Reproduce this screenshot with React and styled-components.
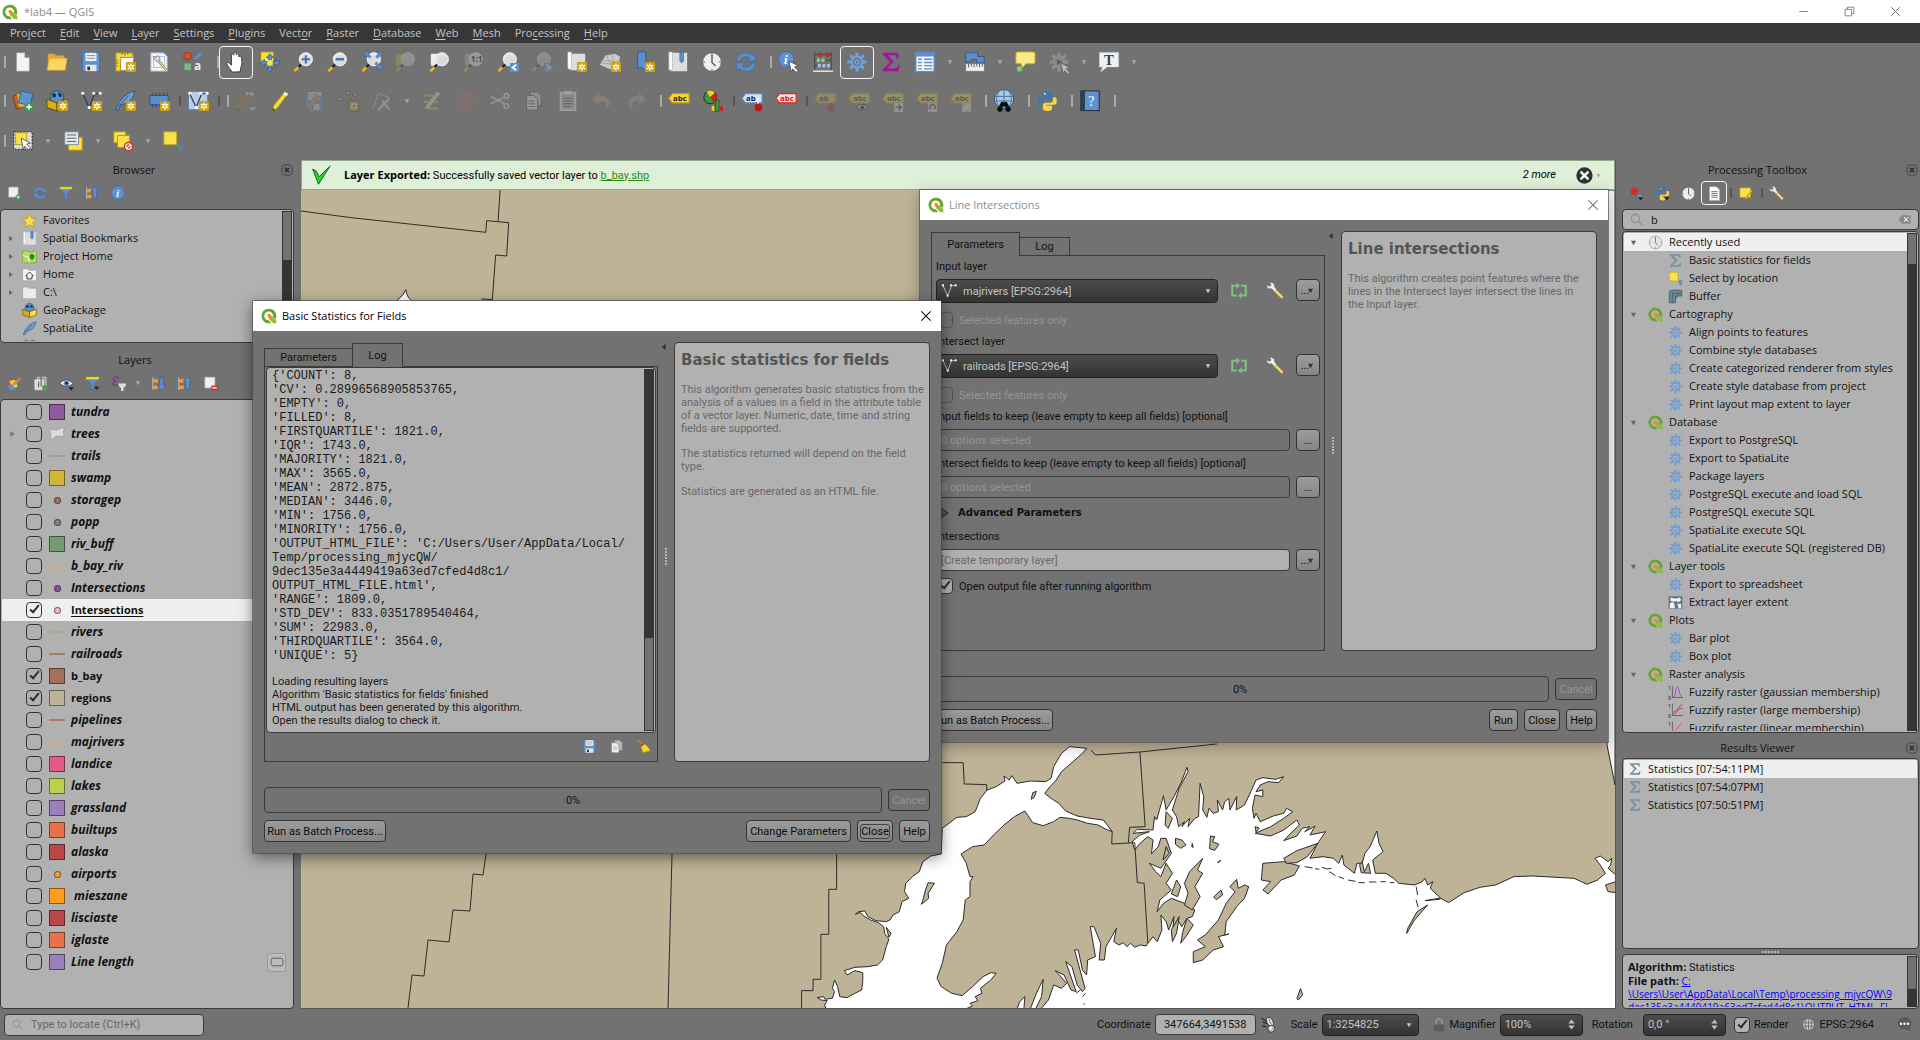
import React from "react";
import styled, { createGlobalStyle, css } from "styled-components";

const ui = '"Open Sans", "Noto Sans", sans-serif';
const dlg = 'Roboto, "Liberation Sans", sans-serif';
const c = {
  bg: "#727272",
  list: "#b1b1b1",
  line: "#3a3a3a",
  dark: "#353535",
  hi: "#efefef",
  land: "#beb297",
  text: "#111",
};

const GlobalStyle = createGlobalStyle`
  *, *::before, *::after { box-sizing: border-box; }
  body { margin: 0; background: ${c.bg}; }
  button, input, select { font: inherit; color: inherit; margin: 0; }
  ul, p, h1, h2, h3 { margin: 0; padding: 0; list-style: none; }
`;

/* ---------- icons ---------- */

const Star = () => (
  <g>
    <rect x="13" y="12" width="11" height="11" rx="1.5" fill="#c9a20c" />
    <path d="M18.5 13.5v8M15 15.5l7 4M22 15.5l-7 4" stroke="#fff" strokeWidth="1.5" />
    <circle cx="18.5" cy="17.5" r="1" fill="#c9a20c" />
  </g>
);
const Lens = ({ handle = "#f0b429" }) => (
  <g>
    <path d="M9 14.5l-3.5 3.5" stroke="#222" strokeWidth="2.4" />
    <path d="M6 17.5L1.5 22" stroke={handle} strokeWidth="2.8" />
    <circle cx="14" cy="9" r="7.200" fill="#d9dcdc" stroke="#f4f4f4" strokeWidth="1" />
    <path d="M8 9a6 6 0 0 1 11-3" fill="none" stroke="#fff" strokeWidth="1" opacity=".8" />
  </g>
);
const Badge = ({ d }) => (
  <g>
    <rect x="14" y="13" width="10" height="10" rx="1" fill="#5b8ecb" />
    <path d={d} fill="none" stroke="#fff" strokeWidth="2" />
  </g>
);
const Page = ({ fill = "#f4f4f4" }) => <path d="M5 2h9l5 5v15H5z M14 2v5h5" fill={fill} stroke="#9a9a9a" strokeWidth=".5" />;
const Pencil = ({ fill = "#f2d93b" }) => (
  <g>
    <path d="M17 2l4 2L9 20l-5 3 1-6z" fill={fill} stroke="#8d7a10" strokeWidth=".8" />
    <path d="M17 2l4 2-1.500 2.500-4-2z" fill="#eee" />
    <path d="M4 23l.5-3 2 1.500z" fill="#333" />
  </g>
);
const Tag = ({ fill = "#f2d93b", stroke = "#c9a20c", ink = "#222", word = "abc" }) => (
  <g>
    <path d="M1 9l4-5h18v10H5z" fill={fill} stroke={stroke} strokeWidth="1.2" />
    <text x="5.500" y="12" fontSize="8.500" fontWeight="700" fontFamily="Open Sans, sans-serif" fill={ink}>{word}</text>
  </g>
);
const Cursor = ({ x = 12, y = 11 }) => (
  <path transform={`translate(${x} ${y})`} d="M0 0l10 5-4 1.500 4 4-2 2-4-4-1.500 4z" fill="#fff" stroke="#444" strokeWidth=".9" />
);
const Gear = ({ fill = "#6fa0dc", hole = "#727272" }) => (
  <g>
    {[0, 45, 90, 135].map((a) => (
      <rect key={a} x="10.300" y="1.500" width="3.400" height="21" rx="1" fill={fill} transform={`rotate(${a} 12 12)`} />
    ))}
    <circle cx="12" cy="12" r="7" fill={fill} />
    <circle cx="12" cy="12" r="4.600" fill={hole} />
    <circle cx="12" cy="12" r="3" fill={fill} />
    <circle cx="12" cy="12" r="1.300" fill={hole} />
  </g>
);
const Refresh = ({ fill = "#5b8ecb" }) => (
  <g fill={fill} stroke="#35618f" strokeWidth=".5">
    <path d="M2 11C2 5 7 1.500 12.500 2c3 .2 5 1.300 6.500 3l3-2.500V11h-9l3.200-3C14 5.500 7.500 5 5.500 11z" />
    <path d="M22 13c0 6-5 9.500-10.500 9-3-.2-5-1.300-6.500-3l-3 2.500V13h9l-3.200 3c2.200 2.500 8.700 3 10.700-3z" />
  </g>
);
const Tree = ({ up }) => (
  <g>
    <path d="M3 2v20M3 8h4M3 19h4" stroke="#ddd" strokeWidth="1.300" fill="none" />
    <rect x="5" y="5" width="6" height="6" fill="#f39a2b" /><rect x="5" y="15" width="6" height="6" fill="#f39a2b" />
    <path d={up ? "M17 1l7 8h-4v12h-6V9h-4z" : "M17 23l7-8h-4V3h-6v12h-4z"} fill="#5b8ecb" stroke="#35618f" />
  </g>
);
const Sigma = ({ fill = "#a4129b" }) => (
  <path d="M3 2h17v6h-1.500C18 5 17 4.500 14 4.500H8.500L15 11.500 8 19h7c3 0 4-.8 5-4h1.500L20 22H3v-1.500l8-8.500-8-8.500z" fill={fill} />
);
const Pin = ({ x = 17, y = 14 }) => (
  <path transform={`translate(${x} ${y})`} d="M3 10C1 6 0 5 0 3a3 3 0 0 1 6 0c0 2-1 3-3 7zM3 1.800a1.200 1.200 0 1 0 .01 0z" fill="#5a86a8" fillRule="evenodd" />
);
const Python = () => (
  <g>
    <path d="M12 1c-5 0-5 2-5 4v2h6v1H4c-3 0-3 8 0 8h2v-3c0-2 1.500-3 3-3h5c2 0 3-1 3-3V4c0-2-2-3-5-3z" fill="#3b78ad" />
    <path d="M12.500 23c5 0 5-2 5-4v-2h-6v-1h9c3 0 3-8 0-8h-2v3c0 2-1.500 3-3 3h-5c-2 0-3 1-3 3v3c0 2 2 3 5 3z" fill="#f8d24c" />
    <circle cx="9.500" cy="4" r="1" fill="#fff" />
  </g>
);
const Table = () => (
  <g>
    <rect x="2" y="1.500" width="20" height="21" fill="#f2f4f6" stroke="#5b8ecb" strokeWidth="1.500" />
    <rect x="2" y="1.500" width="20" height="4.500" fill="#5b8ecb" />
    <path d="M4.500 9h4M4.500 12.500h4M4.500 16h4M4.500 19.500h4M11 9h9M11 12.500h9M11 16h9M11 19.500h9" stroke="#5b8ecb" strokeWidth="1.500" />
  </g>
);
const Clock = ({ face = "#efefef", ink = "#555" }) => (
  <g>
    <circle cx="12" cy="12" r="10.200" fill={face} stroke={ink} strokeWidth=".8" />
    <path d="M12 4v8.500l4 4" stroke={ink} strokeWidth="1.500" fill="none" />
    <path d="M12 2.500v2M12 19.500v2M2.500 12h2M19.500 12h2" stroke={ink} />
  </g>
);
const Wrench = () => (
  <g>
    <path d="M11 10l10 10" stroke="#a98a35" strokeWidth="4.600" strokeLinecap="round" />
    <path d="M12 11l9 9" stroke="#f2dc86" strokeWidth="3" strokeLinecap="round" />
    <path d="M1 4l4 2 2-2-2-3c4-1 7 2 6 5l3 4-2.500 2.500-4-4C4 10 1 8 1 4z" fill="#f1f1f1" stroke="#777" strokeWidth=".6" />
  </g>
);
const Funnel = () => (
  <g>
    <path d="M2 3h20v2l-7.500 8v9l-5-1v-8L2 5z" fill="#5b8ecb" stroke="#35618f" strokeWidth=".7" />
    <path d="M1.500 1.500h21v4h-21z" fill="#f5df3d" stroke="#a9920f" strokeWidth=".8" />
  </g>
);
const GlobeBox = () => (
  <g>
    <circle cx="12" cy="8" r="7.300" fill="#5f8fc4" stroke="#2c4f75" />
    <path d="M7 4c2-1 4 0 4 2s-3 3-4 1zM13 3c3 0 5 2 4 4s-4 0-4-4z" fill="#16324f" />
    <path d="M1 10l11 4v9L1 19z" fill="#d8ad18" stroke="#59480a" /><path d="M23 10l-11 4v9l11-4z" fill="#f6e04c" stroke="#59480a" />
  </g>
);
const Feather = () => <path d="M2 22C5 12 12 4 22 1c0 7-4 13-14 15l-4 6zM5 18L16 6" fill="#6f9fd6" stroke="#2d5276" strokeWidth="1" />;
const Chip = ({ fill = "#5b8ecb" }) => (
  <g><path d="M5 3v16M9 3v16M13 3v16M17 3v16M21 3v16" stroke="#2d4f76" strokeWidth="1.300" /><rect x="2" y="6" width="20" height="10" rx="1" fill={fill} stroke="#2d4f76" /></g>
);
const VLine = ({ ink = "#223a52" }) => (
  <g><path d="M3 4l7 15 6-15 6 0" fill="none" stroke={ink} strokeWidth="1.300" /><g fill="#fff"><circle cx="3" cy="3.500" r="1.700" /><circle cx="10" cy="19" r="1.700" /><circle cx="15" cy="3.500" r="1.700" /><circle cx="22" cy="3.500" r="1.700" /></g></g>
);
const Floppy = () => (
  <g><path d="M2.500 1.500h19v21h-19z" fill="#5f93cf" stroke="#3d6ea5" /><rect x="6" y="2" width="12" height="9" fill="#f0f0f0" /><path d="M7.500 5h9M7.500 8h9" stroke="#888" /><rect x="6" y="15" width="12" height="7" fill="#e6e6e6" /><rect x="8" y="17" width="3" height="4" fill="#333" /></g>
);
const Q = () => (
  <g>
    <path fillRule="evenodd" d="M12 1a11 11 0 1 0 3 21.500l-3.500-4A6.600 6.600 0 1 1 18 13l4 3.500A11 11 0 0 0 12 1z" fill="#6aa42c" />
    <path d="M12 11l4 .5 7 7V23h-4.500l-7-7z" fill="#8fbf3a" />
    <path d="M10 9h5l-1 2 3 3-2.500 2.500-3-3-1.500 1z" fill="#ee8a2c" />
  </g>
);
const Note = () => (
  <g><path d="M3 3h17v15H3z" fill="#f9e14b" stroke="#b8a012" /></g>
);
const Fuzzy = ({ d, stroke }) => (
  <g><path d="M7 1v19h17" fill="none" stroke="#555" strokeWidth="1.300" /><text x="0" y="8" fontSize="8" fontFamily="Open Sans, sans-serif">1</text><text x="0" y="24" fontSize="8" fontFamily="Open Sans, sans-serif">0</text><path d={d} fill="none" stroke={stroke} strokeWidth="1.500" /></g>
);

const glyphs = {
  newPage: <Page />,
  open: <g><path d="M2 3h7l2 2h9v15H2z" fill="#d9a93a" /><path d="M1 21L4 8h19l-2 13z" fill="#fcd462" stroke="#cf9f31" strokeWidth=".6" /></g>,
  save: <Floppy />,
  newLayout: <g><rect x="5" y="3" width="16" height="18" fill="#f7f7f7" /><path d="M2 2h18v5H7v15H2z" fill="#f5d93e" stroke="#a48b12" /><path d="M9 2v2M12 2v3M15 2v2M2 10h2M2 13h3M2 16h2" stroke="#7a6608" /><Star /></g>,
  layouts: <g><path d="M3 2h14l4 4v16H3z" fill="#f7f7f7" stroke="#9ab" /><rect x="6" y="6" width="12" height="12" fill="none" stroke="#9dc0e6" /><path d="M11 10l9 11" stroke="#777" strokeWidth="3" /><path d="M11 10l9 11" stroke="#f0d97f" strokeWidth="1.500" /><path d="M6 6l3 1 1-2c3 1 4 4 2 6-3 1-6-2-6-5z" fill="#ddd" stroke="#555" strokeWidth=".6" /></g>,
  style: <g><circle cx="6" cy="5.500" r="4.200" fill="#d2542d" stroke="#8e3519" /><path d="M14 9l7-7" stroke="#5b8ecb" strokeWidth="3" /><rect x="2" y="13" width="8.500" height="8.500" fill="#82b38a" stroke="#567b5c" /><text x="13" y="21" fontSize="13" fontWeight="700" fontFamily="Open Sans, sans-serif" fill="#eee">a</text></g>,
  hand: <path d="M8 23c-2-3-5-6-6-9 0-2 2-2 3-.5l2 2V4.500c0-2 2.400-2 2.600 0V2.800c0-2 2.700-2 2.800 0v1.400c.2-2 2.600-1.700 2.700.2v2c.3-1.800 2.500-1.500 2.600.3 1 4 1.300 8-.7 12l-.5 4z" fill="#fff" stroke="#333" strokeWidth="1" />,
  panSel: <g><path d="M2 1h14v14H2z" fill="#f9e14b" stroke="#9f8b10" /><path d="M12 3l4 4h-2.500v4.500H18V9l5 4-5 4v-2.500h-4.500V19H16l-4 4-4-4h2.500v-4.500H6V17l-5-4 5-4v2.500h4.500V7H8z" fill="#5b8ecb" stroke="#2d4f76" strokeWidth=".7" /><path d="M9 10h6v6H9z" fill="#f9e14b" /></g>,
  zoomIn: <g><Lens /><path d="M14 4.500v9M9.500 9h9" stroke="#3a73b5" strokeWidth="2.200" /></g>,
  zoomOut: <g><Lens /><path d="M9.500 9h9" stroke="#3a73b5" strokeWidth="2.600" /></g>,
  zoomFull: <g><Lens /><path d="M4 1h6L8 3l3 3-2 2-3-3-2 2zM23 1v6l-2-2-3 3-2-2 3-3-2-2zM23 20h-6l2-2-4-4 2-2 4 4 2-2z" fill="#5b8ecb" stroke="#2d5a92" strokeWidth=".5" /></g>,
  zoomSel: <g opacity=".28"><path d="M1 3h10v13H1z" fill="#c9b53a" /><Lens /></g>,
  zoomLayer: <g><path d="M2 3h9v13H2z" fill="#eee" /><Lens /></g>,
  zoomNative: <g opacity=".35"><path d="M2 3h9v13H2z" fill="#aaa" /><Lens /><text x="8.500" y="12.500" fontSize="9" fontWeight="700" fontFamily="Open Sans, sans-serif">1:1</text></g>,
  zoomLast: <g><Lens /><Badge d="M21 15l-4 3 4 3" /></g>,
  zoomNext: <g opacity=".25"><Lens /><Badge d="M17 15l4 3-4 3" /></g>,
  newMap: <g><path d="M3 1h4v19H5c-2 0-2-2-2-3z" fill="#fff" stroke="#aaa" strokeWidth=".6" /><path d="M7 3h15v18H5c2 0 2-1 2-3z" fill="#dedede" /><Star /></g>,
  new3d: <g><path d="M1 15l6-10 10-2 6 3-2 12-9 2z" fill="#c9c9c9" /><path d="M4 10l17 2M8 5l7 12M14 4l3 13M3 13l16 2" stroke="#999" strokeWidth=".8" /><Star /></g>,
  newBookmark: <g><path d="M5 1h9v21l-4.500-4L5 19z" fill="#5b8ecb" stroke="#2d5a92" /><Star /></g>,
  bookmarks: <g><path d="M2 1h4v20H3c-1 0-1-1-1-2z" fill="#fafafa" stroke="#aaa" strokeWidth=".6" /><path d="M6 2h16v20H3c2 0 3-1 3-3z" fill="#dedede" /><path d="M14 1h4v10l-2 2-2-2z" fill="#5b8ecb" stroke="#2d5a92" strokeWidth=".6" /></g>,
  clock: <Clock />,
  refresh: <Refresh />,
  identify: <g><circle cx="9" cy="9" r="8.300" fill="#5f93cf" stroke="#3c6ea6" /><text x="6.500" y="14" fontSize="14" fontStyle="italic" fontWeight="700" fontFamily="Liberation Serif, serif" fill="#fff">i</text><Cursor /></g>,
  abacus: <g><path d="M3 1v21M21 1v21M3 4h18M3 10h18M3 16h18" stroke="#444" /><path d="M1 22h22" stroke="#eee" strokeWidth="1.500" /><g fill="#d33" stroke="#801" strokeWidth=".5"><circle cx="9" cy="4" r="2" /><circle cx="17" cy="4" r="2" /></g><g fill="#8fd08f"><circle cx="7" cy="10" r="2" /><circle cx="12" cy="10" r="2" /></g><g fill="#9cc4ee"><circle cx="8" cy="16" r="2" /><circle cx="13" cy="16" r="2" /><circle cx="18" cy="16" r="2" /></g></g>,
  gear: <Gear />,
  gearList: <Gear fill="#6f9bd2" hole={c.list} />,
  sigma: <Sigma />,
  sigmaList: <Sigma fill="#7590a2" />,
  table: <Table />,
  measure: <g><path d="M2 2h13v4h7v7h-8V9H8v3H2z" fill="#5b8ecb" stroke="#2d5a92" /><rect x="2" y="14" width="20" height="8" fill="#efefef" stroke="#777" strokeWidth=".6" /><path d="M5 14v4M8 14v3M11 14v4M14 14v3M17 14v4M20 14v3" stroke="#555" /></g>,
  tip: <g><path d="M4 1h17q2 0 2 2v9q0 2-2 2h-8l-5 6v-6H4q-2 0-2-2V3q0-2 2-2z" fill="#fbe984" stroke="#c9a20c" /><circle cx="6" cy="19.500" r="3.500" fill="#8cc08c" stroke="#4c7a4c" strokeWidth=".7" /></g>,
  run: <g opacity=".5"><Gear fill="#aaa" /><circle cx="12" cy="12" r="5" fill="#999" /><path d="M10 9l5 3-5 3z" fill="#444" /><Cursor x={14} y={13} /></g>,
  textNote: <g><path d="M1.500 1.500h21v16H10l-7 5.500 2-5.500H1.500z" fill="#eef2f5" stroke="#ccc" strokeWidth=".5" /><text x="6.500" y="15" fontSize="16" fontWeight="700" fontFamily="Liberation Serif, serif" fill="#3d3d3d">T</text></g>,

  addLayer: <g><path d="M1 7l10-3 3 14-9 3z" fill="#cf5f2a" stroke="#7d3413" /><path d="M5 4l12-1 1 15-11 1z" fill="#e8b62e" stroke="#8e6c10" /><path d="M10 1l13 3-3 13-13-3z" fill="#5f93cf" stroke="#2d5a92" /><circle cx="18.500" cy="18.500" r="5" fill="#3f9a54" /><path d="M18.500 15.500v6M15.500 18.500h6" stroke="#fff" strokeWidth="1.600" /></g>,
  newGpkg: <g><GlobeBox /><Star /></g>,
  gpkg: <GlobeBox />,
  newShape: <g><VLine /><Star /></g>,
  newSpatialite: <g><Feather /><Star /></g>,
  feather: <Feather />,
  newMem: <g><Chip /><Star /></g>,
  virtual: <g><rect x="1.500" y="1.500" width="21" height="20" fill="#b9cfe8" stroke="#5b7ea5" /><VLine /><Star /></g>,
  editsOff: <g opacity=".28"><g transform="translate(-4 0)"><Pencil fill="#b07050" /></g><Pencil fill="#b07050" /><path d="M15 19h8l-4 4z" fill="#ddd" /></g>,
  edit: <Pencil />,
  saveEdits: <g opacity=".25"><Floppy /><Pencil fill="#c88" /></g>,
  addPoint: <g opacity=".3" fill="#ccc" stroke="#333"><circle cx="4" cy="10" r="2" /><circle cx="12" cy="3" r="2" /><circle cx="20" cy="5" r="2" /><Star /></g>,
  vertex: <g opacity=".3"><path d="M2 21L8 4l12 4" stroke="#ddd" fill="none" /><path d="M8 22L20 9M12 12l8 9" stroke="#ddc" strokeWidth="2.500" /></g>,
  multiEdit: <g opacity=".3"><path d="M2 4h18v4H2zM2 11h18v4H2zM2 18h18v4H2z" fill="#c5b83c" stroke="#555" /><Pencil fill="#ddd" /></g>,
  trash: <g opacity=".35" stroke="#b66" fill="none" strokeWidth="1.600"><path d="M3 5h18M9 5V2h6v3M5 8h14l-1 14H6zM9.500 10v10M12 10v10M14.500 10v10" /></g>,
  cut: <g opacity=".35" stroke="#d5d5d5" fill="none" strokeWidth="1.800"><path d="M2 7l15 8M2 15l15-7" /><circle cx="19" cy="6.500" r="2.500" /><circle cx="19" cy="17.500" r="2.500" /></g>,
  copy: <g opacity=".4"><path d="M8 2h8l4 4v11H8z" fill="#bbb" stroke="#444" /><path d="M4 6h8l4 4v12H4z" fill="#ccc" stroke="#444" /><path d="M6 12h7M6 15h7M6 18h7" stroke="#555" /></g>,
  paste: <g opacity=".4"><path d="M4 3h16v19H4z" fill="#aaa" stroke="#ddd" strokeWidth="2" /><rect x="8" y="1" width="8" height="4" fill="#ddd" /><path d="M7 9h10M7 12h10M7 15h10M7 18h7" stroke="#444" /></g>,
  undo: <path opacity=".3" d="M9 3v4c14-1 15 13 4 15 7-5 4-11-4-10v4L1 9.500z" fill="#c89272" />,
  redo: <path opacity=".3" d="M15 3v4C1 6 0 20 11 22c-7-5-4-11 4-10v4l8-6.500z" fill="#8fae95" />,
  label: <Tag />,
  diagram: <g><circle cx="9" cy="8" r="7" fill="#30a040" stroke="#222" /><path d="M9 8L5 2a7 7 0 0 1 9 1z" fill="#f2cf1e" /><path d="M9 8l5-5a7 7 0 0 1-1 11z" fill="#cf1f1f" /><rect x="10" y="17" width="4" height="6" fill="#f2cf1e" stroke="#555" strokeWidth=".5" /><rect x="14.500" y="11" width="4" height="12" fill="#30a040" stroke="#222" strokeWidth=".5" /><rect x="19" y="18" width="4" height="5" fill="#cf1f1f" /></g>,
  labelPin: <g><Tag fill="#cfe4fb" stroke="#5b8ecb" word="ab" /><path d="M18 9l1 8" stroke="#eee" strokeWidth="2" /><circle cx="19" cy="19" r="4.300" fill="#b11a1a" /></g>,
  labelRed: <Tag fill="#fbdede" stroke="#e8231c" ink="#d11" />,
  lpPin: <g opacity=".25"><Tag word="ab" /><circle cx="19" cy="19" r="4.300" fill="#b11a1a" /></g>,
  lpShow: <g opacity=".3"><Tag /><path d="M9 19q6-7 13 0-7 6-13 0z" fill="#bbb" stroke="#222" /><circle cx="15.500" cy="19" r="2" /></g>,
  lpMove: <g opacity=".3"><Tag /><rect x="13" y="14" width="10" height="10" fill="#ddd" /><path d="M14.500 19h6M18 16l3 3-3 3" stroke="#333" strokeWidth="1.500" fill="none" /></g>,
  lpRotate: <g opacity=".3"><Tag /><rect x="13" y="14" width="10" height="10" fill="#ddd" /><path d="M16 21a3 3 0 1 1 4 0" stroke="#333" strokeWidth="1.500" fill="none" /></g>,
  lpEdit: <g opacity=".3"><Tag /><rect x="13" y="14" width="10" height="10" fill="#cca" /><path d="M15 22l6-7" stroke="#fff" strokeWidth="2" /></g>,
  search: <g><circle cx="12" cy="10" r="10.500" fill="#a9c6e8" stroke="#2d4f76" /><path d="M2 7h20M1.500 12h21M12 0v20M6 2q-4 8 0 16M18 2q4 8 0 16" stroke="#4671a3" fill="none" /><path d="M9 13l2-.5 1 2 1-2 2 .5 4 7h-5l-2-3-2 3H5z" fill="#0a0a0a" /><circle cx="7.500" cy="21" r="3" fill="#0a0a0a" stroke="#555" strokeWidth=".6" /><circle cx="16.500" cy="21" r="3" fill="#0a0a0a" stroke="#555" strokeWidth=".6" /></g>,
  python: <Python />,
  help: <g><rect x="2" y="1" width="20" height="21.500" fill="#5f93cf" stroke="#222" /><rect x="2" y="1" width="4.500" height="21.500" fill="#2b3f55" /><text x="10" y="17" fontSize="15" fontFamily="Liberation Serif, serif" fill="#fff">?</text></g>,

  select: <g><rect x="2" y="2" width="20" height="19" fill="#ddd" stroke="#111" strokeDasharray="2 1.500" /><rect x="4" y="3" width="12" height="13" fill="#f9e14b" stroke="#b39a10" /><Cursor x={10} y={9} /></g>,
  selectForm: <g><path d="M7 8h15v14H7z" fill="#f9e14b" stroke="#b39a10" /><path d="M3 2h15v14H3z" fill="#e4e7ea" stroke="#7d8891" /><path d="M5.500 5.500h10M5.500 9h10M5.500 12.500h10" stroke="#5e6a75" strokeWidth="1.200" /></g>,
  deselect: <g><path d="M2 2h13v12H2z" fill="#f9e14b" stroke="#b39a10" /><path d="M6 6h13v13H6z" fill="#f9e14b" stroke="#b39a10" /><circle cx="18" cy="18" r="5.200" fill="#d22b2b" /><circle cx="18" cy="18" r="3" fill="none" stroke="#fff" strokeWidth="1.300" /><path d="M16 20l4-4" stroke="#fff" strokeWidth="1.300" /></g>,
  selectLoc: <g><path d="M2 2h14v14H2z" fill="#f9e14b" stroke="#c2a60c" /><Pin /></g>,

  addBlank: <g><path d="M3 2h16v17H3z" fill="#f0f0f0" stroke="#bbb" /><circle cx="19" cy="19" r="4.500" fill="#4c9a5c" /><path d="M19 16.500v5M16.500 19h5" stroke="#fff" strokeWidth="1.300" /></g>,
  removeBlank: <g><path d="M3 2h16v17H3z" fill="#f0f0f0" stroke="#bbb" /><rect x="13" y="15" width="11" height="8" rx="1.500" fill="#d9342c" /><path d="M15 19h7" stroke="#fff" strokeWidth="2" /></g>,
  funnel: <Funnel />,
  treeUp: <Tree up />,
  treeDown: <Tree />,
  info: <g><circle cx="12" cy="12" r="11" fill="#5f93cf" stroke="#3c6ea6" /><text x="9" y="18" fontSize="17" fontStyle="italic" fontWeight="700" fontFamily="Liberation Serif, serif" fill="#fff">i</text></g>,
  styling: <g><path d="M1 9l8-3 8 12-9 5z" fill="#e04a3a" /><path d="M4 8l9-2 4 11-8 3z" fill="#f3cf36" /><path d="M1 16l8-3 5 9-8 1z" fill="#5f93cf" /><path d="M9 12l12-10 2 2-11 11z" fill="#c98b45" /></g>,
  addGroup: <g><path d="M7 2h14v15H7z" fill="#999" stroke="#eee" /><path d="M3 6h14v16H3z" fill="#ddd" stroke="#eee" /><path d="M9 9v9M13 1v16" stroke="#444" strokeWidth="1.500" /><circle cx="19" cy="19" r="4.500" fill="#4c9a5c" /></g>,
  eye: <g><path d="M1 12q10-12 22 0-11 10-22 0z" fill="#ececec" stroke="#444" strokeWidth="1.500" /><circle cx="12" cy="11.500" r="4.500" fill="#5f8fc4" /><circle cx="12" cy="11.500" r="2" fill="#111" /><path d="M15 18h9l-4.500 5z" fill="#222" /></g>,
  funnelMenu: <g><Funnel /><path d="M14 17h9l-4.500 5z" fill="#222" /></g>,
  expr: <g><path d="M13 4C9 0 3 2 4 6c1 2 3 2 5 2C5 8 2 10 3 13s7 3 10 0" fill="none" stroke="#7d3f86" strokeWidth="2.600" /><path d="M12 12h12v3l-4 4v5h-4v-5l-4-4z" fill="#ddd" /></g>,
  star: <path d="M12 1l3.300 7.700 8.200.7-6.300 5.400 2 8.200L12 18.600 4.800 23l2-8.200L.5 9.400l8.200-.7z" fill="#f7e04a" stroke="#b8960f" strokeWidth="1.200" />,
  projHome: <g><path d="M1 3h8l2 2h12v17H1z" fill="#b8dd5a" stroke="#6f9a24" /><path d="M1 10l9 3 2 9M10 13l12-8" stroke="#f4f7dc" strokeWidth="1.500" fill="none" /><path d="M16 18c-4-4-5-6-3-9 2-2 5-1 6 0 2 3 0 6-3 9z" fill="#168a1c" /></g>,
  home: <g><path d="M1 3h8l2 2h12v17H1z" fill="#f4f4f4" stroke="#999" /><path d="M12 8l6 6h-2v5H8v-5H6z" fill="none" stroke="#333" strokeWidth="1.500" /></g>,
  folder: <path d="M1 3h8l2 2h12v17H1z" fill="#ececec" stroke="#999" />,
  db: <path d="M1 4q5-4 11 0 5-4 11 0v19H1z" fill="#5f8fc4" stroke="#35618f" />,
  q: <Q />,
  clockList: <Clock face="#e6e6e6" ink="#777" />,
  buffer: <path d="M2 22V6q0-4 4-4h16v9H12v11zM7 22V7h15" fill="#6b8b8c" stroke="#48657a" strokeWidth="1.600" />,
  extent: <g><rect x="1" y="2" width="22" height="20" fill="#5d7689" /><path d="M4 4q8 3 15 0l2 4q-4 6-8 1-3 3-9 0zM3 13q4-3 7 0l1 8H3zM15 14h6v7h-4z" fill="#f3f3f3" /></g>,
  fuzzyG: <Fuzzy d="M8 19c5 0 4-16 7-16s3 16 8 16" stroke="#a347c4" />,
  fuzzyL: <Fuzzy d="M8 18c9 0 6-14 15-15M8 15c6-2 8-6 15-7" stroke="#c43c3c" />,
  fuzzyLin: <Fuzzy d="M8 19L23 2" stroke="#d95252" />,
  models: <g><g transform="scale(.7)"><Gear fill="#d42a2a" hole="#d42a2a" /></g><g transform="translate(12 12) scale(.45)"><Gear /></g><path d="M14 18h9l-4.500 5z" fill="#222" /></g>,
  pyMenu: <g><Python /><path d="M14 18h9l-4.500 5z" fill="#222" /></g>,
  doc: <g><path d="M4 1h11l5 5v17H4z" fill="#fafafa" stroke="#aaa" /><path d="M7 9h10M7 12h10M7 15h10M7 18h10" stroke="#666" strokeWidth="1.400" /></g>,
  editNote: <g><Note /><path d="M12 20L22 7" stroke="#d6b21a" strokeWidth="3" /></g>,
  wrench: <Wrench />,
  iterate: <g fill="none" stroke="#7fc187" strokeWidth="2.600"><path d="M10 5H3v13h6M14 18h7V5h-6" /><path d="M9 1l4 4-4 4zM15 14l-4 4 4 4z" fill="#7fc187" strokeWidth=".5" /></g>,
  vectorLight: <VLine ink="#ccc" />,
  copyLight: <g><path d="M9 2h8l4 4v12H9z" fill="#bbb" stroke="#888" /><path d="M4 6h8l4 4v12H4z" fill="#eee" stroke="#888" /><path d="M6 13h7M6 16h7" stroke="#999" /></g>,
  broom: <g><path d="M2 1l9 9" stroke="#c07b22" strokeWidth="3" /><path d="M8 12l5-4c5 2 8 7 10 11l-12 3c-1-3-2-6-3-10z" fill="#f1d535" stroke="#a2830f" /><path d="M8 11l4-3" stroke="#c33" strokeWidth="2.500" /></g>,
  check: <path d="M2 5l4 2 4 7L23 1 9 23z" fill="#27d32c" stroke="#14681a" strokeWidth="1.200" />,
  closeRound: <g><circle cx="12" cy="12" r="11.500" fill="#2f332f" /><path d="M7.500 7.500l9 9M16.500 7.500l-9 9" stroke="#fff" strokeWidth="3.600" strokeLinecap="round" /></g>,
  dockClose: <g><rect x="3" y="3" width="18" height="18" rx="7" fill="none" stroke="#4a4a4a" strokeWidth="2" /><path d="M8.500 8.500l7 7M15.500 8.500l-7 7" stroke="#333" strokeWidth="3" /></g>,
  x: <path d="M5 5l14 14M19 5L5 19" stroke="currentColor" strokeWidth="1.600" />,
  min: <path d="M4 12h16" stroke="currentColor" strokeWidth="1.600" />,
  restore: <path d="M4 8h12v12H4zM8 8V4h12v12h-4" fill="none" stroke="currentColor" strokeWidth="1.600" />,
  down: <path d="M5 7h14l-7 12z" fill="currentColor" />,
  right: <path d="M7 3l13 9-13 9z" fill="currentColor" />,
  left: <path d="M17 3L5 12l12 9z" fill="currentColor" />,
  triangle: <path d="M6 2l14 10L6 22z" fill="#555" stroke="#222" strokeWidth="2" />,
  mag: <g fill="none" stroke="#8b8b8b" strokeWidth="2"><circle cx="10" cy="10" r="7.500" /><path d="M16 16l7 7" /></g>,
  clear: <g><path d="M1 12l7-8h15v16H8z" fill="#888" /><path d="M11 8l8 8M19 8l-8 8" stroke="#eee" strokeWidth="2" /></g>,
  spin: <path d="M12 1l7 9H5zM12 23l7-9H5z" fill="#c0c0c0" />,
  lock: <g><path d="M7 12V7c0-7 10-7 10 0v5" fill="none" stroke="#999" strokeWidth="2.600" /><rect x="3" y="11" width="18" height="12" rx="1" fill="#5c5c5c" /></g>,
  globe: <g><circle cx="12" cy="12" r="10" fill="#ccc" /><path d="M2 9h20M2 15h20M12 2v20M8 3q-4 9 0 18M16 3q4 9 0 18" stroke="#555" fill="none" strokeWidth="1.300" /></g>,
  bubble: <g><path d="M2 11a10 9 0 1 1 17 6l2 5-7-3A10 9 0 0 1 2 11z" fill="#5a5a5a" /><circle cx="7" cy="11" r="1.700" fill="#fff" /><circle cx="12" cy="11" r="1.700" fill="#fff" /><circle cx="17" cy="11" r="1.700" fill="#fff" /></g>,
  mouse: <g><path d="M2 3l8 5M4 8l6 3M3 14l6 1" stroke="#222" strokeWidth="1.500" /><ellipse cx="14" cy="8" rx="4" ry="7" fill="#eee" stroke="#222" transform="rotate(-25 14 8)" /><path d="M12 3l4 9" stroke="#222" /><circle cx="16" cy="18" r="5" fill="#bbb" stroke="#222" /><circle cx="15" cy="17" r="2" fill="#fff" /></g>,
  chipFlat: <g fill="none" stroke="#777" strokeWidth="2"><rect x="2" y="6" width="20" height="12" rx="2" /><path d="M7 3v3M12 3v3M17 3v3M7 18v3M12 18v3M17 18v3" /></g>,
  poly: <path d="M1 4q6 3 11 2 6-4 11-3-3 7 0 13-8-1-12-1-5 6-9 4 2-8-1-15z" fill="#dcdcdc" stroke="#9b9b9b" />,
};

const Svg = styled.svg`
  width: ${(p) => p.$s}px;
  height: ${(p) => p.$s}px;
  flex: none;
  display: block;
  overflow: visible;
`;
const Icon = ({ n, s = 16 }) => <Svg $s={s} viewBox="0 0 24 24" aria-hidden="true">{glyphs[n]}</Svg>;

/* ---------- shell ---------- */

const Window = styled.div`
  position: relative;
  display: flex;
  flex-direction: column;
  height: 100vh;
  overflow: hidden;
  background: ${c.bg};
  color: ${c.text};
  font: 11px/18px ${ui};
`;
const TitleBar = styled.header`
  display: flex;
  align-items: center;
  gap: 6px;
  height: 23px;
  padding-left: 2px;
  background: #fff;
  color: #8c8c8c;
  h1 { flex: 1; font-size: 11px; font-weight: 400; }
`;
const WinControls = styled.div`
  display: flex;
  padding-right: 2px;
`;
const WinButton = styled.button`
  display: grid;
  place-items: center;
  width: 46px;
  height: 22px;
  padding: 0;
  border: 0;
  background: none;
  color: ${(p) => (p.$on ? "#111" : "#777")};
`;
const MenuBar = styled.nav`
  display: flex;
  height: 20px;
  padding-left: 3px;
  background: #373737;
`;
const MenuItem = styled.button`
  padding: 0 7px;
  border: 0;
  background: none;
  color: #c4c4c4;
  line-height: 20px;
  u { text-underline-offset: 2px; }
`;
const Toolbar = styled.div`
  display: flex;
  align-items: center;
  height: ${(p) => p.$h}px;
`;
const Handle = styled.span`
  width: ${(p) => (p.$first ? 6 : 9)}px;
  height: 12px;
  border-right: 2px solid #a9a9a9;
`;
const Sep = styled.span`
  width: 5px;
  height: 10px;
  border-right: 2px solid #555;
`;
const Tool = styled.button`
  display: grid;
  place-items: center;
  width: ${(p) => p.$w || 34}px;
  height: ${(p) => (p.$w ? 24 : 33)}px;
  flex: none;
  padding: 0;
  border: ${(p) => (p.$on ? "1px solid #f2f2f2" : "0")};
  border-radius: 4px;
  background: none;
`;
const Drop = styled.button`
  display: grid;
  place-items: center;
  width: ${(p) => p.$w || 16}px;
  height: 16px;
  padding: 0;
  border: 0;
  background: none;
  color: #a9a9a9;
`;

const menus = [["Pro", "j", "ect"], ["", "E", "dit"], ["", "V", "iew"], ["", "L", "ayer"], ["", "S", "ettings"], ["", "P", "lugins"], ["Vect", "o", "r"], ["", "R", "aster"], ["", "D", "atabase"], ["", "W", "eb"], ["", "M", "esh"], ["Pro", "c", "essing"], ["", "H", "elp"]];
const row1 = "^ newPage open save newLayout layouts style | *hand panSel zoomIn zoomOut zoomFull zoomSel zoomLayer zoomNative zoomLast zoomNext newMap new3d newBookmark bookmarks clock refresh | identify abacus *gear sigma table v measure v tip run v textNote v";
const row2 = "^ addLayer newGpkg newShape newSpatialite newMem . virtual . | editsOff edit saveEdits addPoint vertex v multiEdit trash cut copy paste undo redo | label diagram . labelPin labelRed . lpPin lpShow lpMove lpRotate lpEdit | search | python | help |";
const row3 = "^ select v selectForm v deselect v selectLoc";

const Tools = ({ spec, w, s = 22 }) =>
  spec.split(" ").map((t, i) => {
    if (t === "^") return <Handle key={i} $first />;
    if (t === "|") return <Handle key={i} />;
    if (t === ".") return <Sep key={i} />;
    if (t === "v") return <Drop key={i} $w={w ? 14 : 16} aria-label="More"><Icon n="down" s={8} /></Drop>;
    const on = t[0] === "*";
    const n = on ? t.slice(1) : t;
    return <Tool key={i} $w={w} $on={on} aria-label={n}><Icon n={n} s={s} /></Tool>;
  });

/* ---------- docks ---------- */

const Body = styled.main`
  display: grid;
  grid-template-columns: 301px minmax(0, 1fr) 304px;
  flex: 1;
  min-height: 0;
`;
const Dock = styled.aside`
  display: flex;
  flex-direction: column;
  min-height: 0;
  padding: ${(p) => (p.$right ? "0 1px 0 6px" : "0 7px 0 0")};
`;
const DockTitle = styled.div`
  display: flex;
  align-items: center;
  height: 20px;
  h2 { flex: 1; padding-right: ${(p) => (p.$bare ? 24 : 12)}px; font-size: 11px; font-weight: 400; text-align: center; }
`;
const IconButton = styled.button`
  display: grid;
  place-items: center;
  padding: 0;
  border: 0;
  background: none;
`;
const DockTools = styled.div`
  display: flex;
  align-items: center;
  height: 26px;
  margin-bottom: 3px;
  padding-left: 1px;
`;
const Frame = styled.div`
  display: flex;
  min-height: 0;
  padding: 1px;
  border: 1px solid ${c.line};
  border-radius: 4px;
  background: ${c.list};
  overflow: hidden;
  flex: ${(p) => (p.$h ? "none" : 1)};
  height: ${(p) => (p.$h ? `${p.$h}px` : "auto")};
  margin-bottom: ${(p) => p.$mb || 0}px;
`;
const List = styled.ul`
  flex: 1;
  min-width: 0;
  overflow: hidden;
`;
const Scroll = styled.div`
  width: 10px;
  flex: none;
  display: flex;
  flex-direction: column;
  justify-content: ${(p) => (p.$end ? "flex-end" : "flex-start")};
  background: ${c.dark};
`;
const Thumb = styled.span`
  height: ${(p) => p.$h};
  border: 1px solid ${c.dark};
  background: ${c.bg};
`;
const TreeRow = styled.li`
  display: flex;
  align-items: center;
  height: 18px;
  white-space: nowrap;
  padding-left: ${(p) => p.$pad || 0}px;
  background: ${(p) => (p.$on ? c.hi : "none")};
  .arrow { width: ${(p) => p.$arrow || 20}px; padding-left: 5px; color: #666; }
  svg + span { padding-left: 6px; }
`;

const LayerRow = styled.li`
  display: flex;
  align-items: center;
  height: 22px;
  background: ${(p) => (p.$on ? c.hi : "none")};
  .arrow { width: 24px; padding-left: 6px; color: #777; }
`;
const Check = styled.input`
  appearance: none;
  width: 16px;
  height: 16px;
  flex: none;
  border: 1px solid ${(p) => (p.disabled ? "#555" : "#333")};
  border-radius: 4px;
  background: ${(p) => (p.$fill ? c.list : "transparent")};
  position: relative;
  &:checked::after {
    content: "";
    position: absolute;
    left: 5px;
    top: 0;
    width: 5px;
    height: 10px;
    border: solid #2c2c2c;
    border-width: 0 2px 2px 0;
    transform: rotate(40deg);
  }
`;
const Swatch = styled.span`
  display: grid;
  place-items: center;
  width: 16px;
  height: 16px;
  margin: 0 6px 0 7px;
  flex: none;
  ${(p) => p.$k === "fill" && css`background: ${p.$c}; border: 1px solid rgba(0, 0, 0, 0.45);`}
  ${(p) => p.$k === "line" && css`&::before { content: ""; width: 16px; height: 2px; background: ${p.$c}; }`}
  ${(p) => p.$k === "dot" && css`&::before { content: ""; width: 7px; height: 7px; border-radius: 50%; background: ${p.$c}; border: 1px solid rgba(40, 40, 40, 0.6); }`}
`;
const LayerName = styled.label`
  flex: 1;
  color: #111;
  font-weight: 700;
  white-space: pre;
  ${(p) => (p.$it ? css`font-style: italic; font-size: 12px;` : css`font-size: 11px;`)}
  ${(p) => p.$u && css`text-decoration: underline; text-underline-offset: 2px;`}
`;
const ChipButton = styled.button`
  display: grid;
  place-items: center;
  width: 19px;
  height: 19px;
  margin-right: 6px;
  padding: 0;
  border: 1px solid #999;
  border-radius: 3px;
  background: #bcbcbc;
`;

const layers = [
  ["tundra", "fill", "#8e5b9c"], ["trees", "poly", "", { arrow: true }], ["trails", "line", "#90a68f"], ["swamp", "fill", "#d5b43c"],
  ["storagep", "dot", "#a5705a"], ["popp", "dot", "#76888a"], ["riv_buff", "fill", "#739c70"], ["b_bay_riv", "line", "#c3b36e"],
  ["Intersections", "dot", "#8a529d"], ["Intersections", "dot", "#efb6bc", { on: true, ck: true, plain: true }], ["rivers", "line", "#9db492"],
  ["railroads", "line", "#a37c6d"], ["b_bay", "fill", "#a57058", { ck: true, plain: true }], ["regions", "fill", "#beb297", { ck: true, plain: true }],
  ["pipelines", "line", "#b97272"], ["majrivers", "line", "#c3b36e"], ["landice", "fill", "#e25a88"], ["lakes", "fill", "#bdd04e"],
  ["grassland", "fill", "#9a7fb8"], ["builtups", "fill", "#e77148"], ["alaska", "fill", "#b94648"], ["airports", "dot", "#ff9e17"],
  [" mieszane", "fill", "#ff9e17"], ["lisciaste", "fill", "#b94648"], ["iglaste", "fill", "#e77148"], ["Line length", "fill", "#9a7fb8", { chip: true }],
];

const browser = [["star", "Favorites"], ["bookmarks", "Spatial Bookmarks", 1], ["projHome", "Project Home", 1], ["home", "Home", 1], ["folder", "C:\\", 1], ["gpkg", "GeoPackage"], ["feather", "SpatiaLite"], ["db", ""]];

const toolbox = [
  ["clockList", "Recently used", [["sigmaList", "Basic statistics for fields"], ["selectLoc", "Select by location"], ["buffer", "Buffer"]]],
  ["q", "Cartography", ["Align points to features", "Combine style databases", "Create categorized renderer from styles", "Create style database from project", "Print layout map extent to layer"]],
  ["q", "Database", ["Export to PostgreSQL", "Export to SpatiaLite", "Package layers", "PostgreSQL execute and load SQL", "PostgreSQL execute SQL", "SpatiaLite execute SQL", "SpatiaLite execute SQL (registered DB)"]],
  ["q", "Layer tools", ["Export to spreadsheet", ["extent", "Extract layer extent"]]],
  ["q", "Plots", ["Bar plot", "Box plot"]],
  ["q", "Raster analysis", [["fuzzyG", "Fuzzify raster (gaussian membership)"], ["fuzzyL", "Fuzzify raster (large membership)"], ["fuzzyLin", "Fuzzify raster (linear membership)"]]],
];

const SearchBox = styled.label`
  display: flex;
  align-items: center;
  height: 21px;
  margin-bottom: 1px;
  padding: 0 7px;
  border: 1px solid ${c.line};
  border-radius: 4px;
  background: ${c.list};
  input { flex: 1; min-width: 0; padding: 0 0 0 8px; border: 0; outline: 0; background: none; }
`;
const Grip = styled.div`
  display: grid;
  place-items: center;
  ${(p) => (p.$v ? css`width: 16px;` : css`height: 5px;`)}
  &::before {
    content: "";
    ${(p) => (p.$v
      ? css`width: 2px; height: 17px; background: repeating-linear-gradient(#b5b5b5 0 2px, transparent 2px 3px);`
      : css`width: 17px; height: 2px; background: repeating-linear-gradient(90deg, #b5b5b5 0 2px, transparent 2px 3px);`)}
  }
`;
const Details = styled.div`
  flex: 1;
  min-width: 0;
  padding: 4px 0 0 4px;
  font: 11px/13px ${dlg};
  white-space: nowrap;
  overflow: hidden;
  strong { font-family: ${ui}; }
  a { color: #0000f0; font: 10px/13px ${ui}; }
`;

/* ---------- map ---------- */

const MapArea = styled.section`
  display: flex;
  flex-direction: column;
  min-width: 0;
  min-height: 0;
  border: 1px solid #555;
  border-width: 0 1px 1px 0;
  background: ${c.land};
`;
const MessageBar = styled.div`
  display: flex;
  align-items: center;
  height: 30px;
  flex: none;
  padding: 0 11px 0 9px;
  border: 1px solid #93a58b;
  background: #dff0d8;
  color: #000;
  font-family: ${dlg};
  strong { margin-left: 13px; font-family: ${ui}; }
  p { flex: 1; }
  a { color: #2b8a10; }
  em { margin-right: 20px; }
`;
const MapSvg = styled.svg`
  display: block;
  flex: 1;
  min-height: 0;
  width: 100%;
`;
const inlet = "M50 838L47 825 52 812 40 810 33 803 45 800 48 808 62 805 66 785 62 775 66 750 72 770 76 800 90 803 105 790 118 780 120 755 120 728 105 722 90 735 85 722 105 712 130 710 148 705 158 690 165 650 170 628 162 610 160 590 150 578 135 570 122 558 115 547 106 553 112 545 124 543 130 560 145 572 165 575 172 570 178 555 190 545 195 515 208 505 200 485 202 460 215 440 228 425 235 395 250 378 270 372 272 295 300 262 318 260 335 245 345 205 358 180 375 170 392 153 390 138 400 150 405 137 415 160 440 153 470 155 480 145 485 110 500 70 515 50 530 52 548 55 540 70 522 95 500 125 490 150 478 170 468 190 480 205 495 220 508 243 530 258 555 265 580 270 590 290 597 305 585 298 570 285 550 280 530 270 515 265 497 262 485 275 465 287 445 278 430 243 410 260 390 285 370 315 352 345 330 350 308 372 318 400 325 440 331 440 325 455 325 500 316 510 312 570 300 605 280 645 272 700 262 745 270 770 290 790 310 797 330 770 350 740 365 728 375 730 365 750 345 775 348 790 335 800 340 812 325 820 330 828 315 838Z";
const ocean = "M415 838L420 815 430 800 428 838 440 838 452 790 465 748 462 800 450 838 460 838 475 810 485 765 500 775 510 760 488 722 505 735 518 780 528 785 508 695 520 710 530 765 540 785 545 775 525 660 532 660 540 720 548 735 550 690 565 680 555 590 562 590 575 640 572 690 582 690 585 650 605 595 600 635 610 645 618 638 625 650 632 640 640 652 650 645 662 648 665 640 675 620 683 635 692 600 690 555 700 575 705 600 715 560 712 610 722 570 730 590 740 565 750 560 755 540 735 520 710 505 695 520 683 545 688 510 710 480 700 460 712 430 700 400 690 440 680 425 668 400 690 415 710 370 700 325 690 325 685 350 672 372 675 330 665 320 650 340 640 360 635 335 650 315 668 305 637 310 645 298 675 300 678 260 682 270 695 197 700 240 715 200 728 160 740 112 742 125 725 175 712 240 720 260 724 290 735 275 730 290 745 265 742 290 755 265 762 260 765 160 772 200 770 240 778 262 782 235 790 250 800 245 798 210 808 240 812 215 820 205 822 240 835 200 834 240 850 225 862 185 872 150 885 143 910 148 925 140 915 158 895 155 880 165 872 185 885 180 885 200 870 195 865 235 868 265 872 250 880 275 905 258 925 250 930 235 942 245 925 265 900 290 870 310 900 318 925 300 950 270 955 285 935 315 925 332 950 318 960 295 975 290 965 305 985 288 975 315 1005 305 990 340 975 385 1000 380 1020 385 1030 400 1037 375 1040 405 1060 430 1065 400 1075 400 1080 370 1090 350 1103 303 1107 340 1115 365 1095 390 1100 430 1120 430 1135 445 1145 460 1175 465 1190 455 1195 445 1200 465 1210 455 1205 475 1225 505 1240 518 1270 488 1300 472 1330 465 1365 440 1400 438 1480 445 1505 463 1525 450 1540 430 1530 405 1520 385 1530 378 1545 395 1552 385 1550 405 1545 415 1560 435 1560 455 1540 465 1545 485 1560 488 1560 838Z";
const islands = [
  "M858 470L850 505 835 530 815 575 812 615 820 612 800 620 810 650 790 660 770 690 752 698 752 665 775 650 760 630 775 615 800 570 815 520 832 485 822 470 835 448 838 475 850 465Z",
  "M885 400L925 395 955 408 945 435 920 450 895 492 885 480 900 455 882 450Z",
  "M930 400L925 385 950 362 990 340 970 380 950 398Z",
  "M770 385L760 420 770 430 755 470 765 500 750 540 735 525 742 490 735 460 745 425Z",
  "M718 325l12 5 8 15-10 10-10-12zM785 318l8 2-4 15 12 8-8 18-10-5zM750 340l2 12-3-2zM800 395l5-4-6 8zM805 480l3 15-12 14-5-8z",
  "M740 565l12 20-12 30-12 25 4-35zM725 560l-5 50-8 25-2-35zM720 450l8 20-6 30-12-8z",
  "M1200 525L1175 570 1160 610 1162 595 1180 545ZM957 776l4 18-8 16-3-4z",
  "M245 458L257 460 245 490 246 505 232 523 236 505 240 480ZM442 208L445 188 452 184 448 202ZM165 592l9 18-4 12z",
  "M1070 405l5-10 4 30 8-25 4 30-18-2zM1195 512l30-8-2 4z",
  "M700 350l-6 40 12-20zM700 245l12 20-8 30-6-10zM870 290l8 4-6 12z",
];
const borders = [
  "M272 98H312L314 162 357 164V182M557 60L565 75 650 66 797 42M650 66L660 290 630 292 628 338M597 305L596 342 640 338 645 458 658 460 665 640",
  "M70 373V478H55V613H40V748H25V782H3V838",
  "M965 410l15 4M985 416l8 2M998 412l10 5 8-2M1012 425l12 12M1030 440l10 6M1048 450l14 4M1068 458h12M1088 456h14M1110 455h10M1128 458h8M1178 470l3 25M1178 510l4 22",
  "M528 790l8-10M540 800l6-10M542 820l3 4",
];
const MapCanvas = () => (
  <MapSvg viewBox="301 190 1314 818" preserveAspectRatio="xMinYMin slice" role="img" aria-label="Map of the regions layer">
    <g fill="none" stroke="#2c2c2c" strokeWidth="1">
      <g transform="translate(290 155) scale(.408 .3333)">
        <path vectorEffect="non-scaling-stroke" d="M27 168L150 188 480 232 482 197 536 203 531 303 504 300 496 434 469 432M515 104L510 198" />
        <path vectorEffect="non-scaling-stroke" fill="#fff" d="M262 437Q280 420 284 404 Q285 425 298 437V460H262Z" />
      </g>
      <path d="M486 854L483 875 473 874 470 911 453 910 449 942 428 940 424 976 412 975 408 1008M672 854L668 1008" />
      <g transform="translate(800 730) scale(.523 .3333)">
        <path vectorEffect="non-scaling-stroke" fill="#fff" d={inlet} />
        <path vectorEffect="non-scaling-stroke" fill="#fff" d={ocean} />
        {islands.map((d) => <path key={d} vectorEffect="non-scaling-stroke" fill={c.land} d={d} />)}
        {borders.map((d) => <path key={d} vectorEffect="non-scaling-stroke" d={d} />)}
      </g>
      <path d="M1607 190V745L1615 785V190Z" fill="#f4f4f4" />
    </g>
  </MapSvg>
);

/* ---------- dialogs ---------- */

const DialogBox = styled.section`
  position: absolute;
  left: ${(p) => p.$x}px;
  top: ${(p) => p.$y}px;
  width: 688px;
  background: ${c.bg};
  box-shadow: 0 0 0 1px rgba(70, 70, 70, 0.6), 0 4px 14px rgba(0, 0, 0, ${(p) => (p.$on ? 0.5 : 0.3)});
  font: 11px/13px ${dlg};
`;
const DialogTitle = styled.header`
  display: flex;
  align-items: center;
  gap: 5px;
  height: 30px;
  padding-left: 8px;
  background: #fff;
  color: ${(p) => (p.$on ? "#000" : "#8c8c8c")};
  h2 { flex: 1; font: 400 11px/16px ${ui}; }
  button { width: 30px; }
`;
const DialogBody = styled.div`
  padding: 11px;
`;
const Split = styled.div`
  display: grid;
  grid-template-columns: minmax(0, 1fr) 16px 256px;
  height: 420px;
`;
const Left = styled.div`
  display: flex;
  flex-direction: column;
  min-height: 0;
`;
const Tabs = styled.div`
  display: flex;
  align-items: flex-end;
  height: 24px;
`;
const Tab = styled.button`
  width: ${(p) => p.$w}px;
  height: ${(p) => (p.$on ? 24 : 18)}px;
  margin-bottom: ${(p) => (p.$on ? -1 : 0)}px;
  padding: 0;
  border: 1px solid ${c.line};
  border-bottom: 0;
  background: ${c.bg};
  z-index: 1;
  & + & { margin-left: -1px; }
`;
const Pane = styled.div`
  display: flex;
  flex-direction: column;
  flex: 1;
  min-height: 0;
  padding: ${(p) => (p.$flush ? "0 1px 1px" : "3px 4px 0")};
  border: 1px solid ${c.line};
`;
const Middle = styled.div`
  display: flex;
  flex-direction: column;
  color: #333;
  > svg { margin: 1px 0 0 2px; }
  > div { flex: 1; }
`;
const HelpPane = styled.article`
  padding: 8px 0 0 6px;
  border: 1px solid ${c.line};
  border-radius: 4px;
  background: ${c.list};
  color: #686868;
  h3 { margin-bottom: 14px; color: #545454; font: 700 15px/18px "DejaVu Sans", sans-serif; }
  p { margin-bottom: 12px; white-space: pre-line; }
`;
const Progress = styled.div`
  display: grid;
  grid-template-columns: minmax(0, 1fr) auto;
  align-items: center;
  gap: 6px;
  margin: 25px 0 7px;
`;
const Bar = styled.div`
  height: 26px;
  border: 1px solid ${c.line};
  border-radius: 4px;
  line-height: 25px;
  text-align: center;
`;
const Buttons = styled.div`
  display: flex;
  gap: 6px;
  > :first-child { margin-right: auto; }
`;
const Push = styled.button`
  width: ${(p) => p.$w}px;
  height: 22px;
  flex: none;
  padding: 0;
  border: 1px solid #333;
  border-radius: 4px;
  background: linear-gradient(#9c9c9c, #858585);
  color: #0c0c0c;
  white-space: nowrap;
  &:disabled { background: none; color: #949494; }
  span { ${(p) => p.$focus && css`outline: 1px solid #444; border-radius: 2px;`} }
`;
const Label = styled.label`
  display: block;
  height: 16px;
  margin: ${(p) => p.$mt || 0}px 0 4px;
  line-height: 16px;
`;
const Line = styled.div`
  display: flex;
  align-items: flex-start;
  gap: 6px;
`;
const Combo = styled.span`
  display: flex;
  align-items: center;
  gap: 6px;
  width: ${(p) => p.$w}px;
  height: ${(p) => p.$h || 24}px;
  padding: 0 5px 0 4px;
  border: 1px solid #222;
  border-radius: 4px;
  background: linear-gradient(#4c4c4c, #333);
  color: #c4c4c4;
  select, input { flex: 1; min-width: 0; appearance: none; padding: 0; border: 0; outline: 0; background: none; }
`;
const Field = styled.input`
  flex: 1;
  min-width: 0;
  height: 22px;
  padding: 0 4px;
  border: 1px solid ${c.line};
  border-radius: 4px;
  background: ${(p) => (p.$fill ? c.list : "transparent")};
  color: ${(p) => (p.$fill ? "#686868" : "#949494")};
  &::placeholder { color: inherit; opacity: 1; }
`;
const CheckLine = styled.label`
  display: flex;
  align-items: center;
  gap: 6px;
  height: 16px;
  margin: ${(p) => p.$mt}px 0 0 1px;
  color: ${(p) => (p.$off ? "#949494" : "inherit")};
`;
const Dots = styled(Push)`
  display: flex;
  align-items: center;
  justify-content: center;
  svg { color: #333; margin-left: -3px; }
`;
const More = ({ menu }) => (
  <Dots $w={24} aria-label="Browse"><span>...</span>{menu && <Icon n="down" s={9} />}</Dots>
);
const Advanced = styled.button`
  display: flex;
  align-items: center;
  gap: 8px;
  height: 16px;
  margin-top: 7px;
  padding: 0 0 0 2px;
  border: 0;
  background: none;
  font: 700 10px/16px "DejaVu Sans", sans-serif;
`;
const LogBox = styled.div`
  display: flex;
  flex: 1;
  min-height: 0;
  padding: 1px;
  border: 1px solid ${c.line};
  border-radius: 4px;
  background: ${c.list};
  color: #1a1a1a;
`;
const LogText = styled.div`
  flex: 1;
  padding: 0 0 0 4px;
  pre { margin: 0 0 12px; font: 12px/14px "Liberation Mono", monospace; }
`;
const LogFooter = styled.div`
  display: flex;
  justify-content: flex-end;
  align-items: center;
  gap: 12px;
  height: 27px;
  padding-right: 5px;
`;
const LayerCtl = styled.div`
  display: flex;
  justify-content: space-between;
  align-items: center;
  width: 66px;
  height: 24px;
  padding: 0 6px;
`;

function Dialog({ x, y, on, title, tabs, children, flush, helpTitle, help, actions }) {
  return (
    <DialogBox $x={x} $y={y} $on={on} role="dialog" aria-label={title}>
      <DialogTitle $on={on}>
        <Icon n="q" />
        <h2>{title}</h2>
        <WinButton $on={on} aria-label="Close window"><Icon n="x" /></WinButton>
      </DialogTitle>
      <DialogBody>
        <Split>
          <Left>
            <Tabs role="tablist">
              {tabs.map(([t, w, sel]) => <Tab key={t} role="tab" aria-selected={!!sel} $w={w} $on={sel}>{t}</Tab>)}
            </Tabs>
            <Pane $flush={flush}>{children}</Pane>
          </Left>
          <Middle><Icon n="left" s={8} /><Grip $v /></Middle>
          <HelpPane>
            <h3>{helpTitle}</h3>
            {help.map((h) => <p key={h}>{h}</p>)}
          </HelpPane>
        </Split>
        <Progress>
          <Bar role="progressbar" aria-valuenow={0}>0%</Bar>
          <Push $w={42} disabled>Cancel</Push>
        </Progress>
        <Buttons>
          <Push $w={122}>Run as Batch Process...</Push>
          {actions.map(([t, w, f]) => <Push key={t} $w={w} $focus={f}><span>{t}</span></Push>)}
        </Buttons>
      </DialogBody>
    </DialogBox>
  );
}

const LayerInput = ({ id, label, value, mt }) => (
  <>
    <Label htmlFor={id} $mt={mt}>{label}</Label>
    <Line>
      <Combo $w={282}>
        <Icon n="vectorLight" />
        <select id={id} defaultValue={value}><option>{value}</option></select>
        <Icon n="down" s={8} />
      </Combo>
      <LayerCtl>
        <IconButton aria-label="Iterate"><Icon n="iterate" s={18} /></IconButton>
        <IconButton aria-label="Options"><Icon n="wrench" s={18} /></IconButton>
      </LayerCtl>
      <More menu />
    </Line>
    <CheckLine $mt={9} $off><Check type="checkbox" disabled />Selected features only</CheckLine>
  </>
);

const logLines = `{'COUNT': 8,
'CV': 0.28996568905853765,
'EMPTY': 0,
'FILLED': 8,
'FIRSTQUARTILE': 1821.0,
'IQR': 1743.0,
'MAJORITY': 1821.0,
'MAX': 3565.0,
'MEAN': 2872.875,
'MEDIAN': 3446.0,
'MIN': 1756.0,
'MINORITY': 1756.0,
'OUTPUT_HTML_FILE': 'C:/Users/User/AppData/Local/
Temp/processing_mjycQW/
9dec135e3a4449419a63ed7cfed4d8c1/
OUTPUT_HTML_FILE.html',
'RANGE': 1809.0,
'STD_DEV': 833.0351789540464,
'SUM': 22983.0,
'THIRDQUARTILE': 3564.0,
'UNIQUE': 5}`;

/* ---------- status bar ---------- */

const Status = styled.footer`
  display: flex;
  align-items: center;
  gap: 4px;
  height: 31px;
  padding: 0 7px 0 4px;
  font: 11px/14px ${dlg};
`;
const Locate = styled(SearchBox)`
  width: 200px;
  height: 22px;
  margin: 0 auto 0 0;
  input::placeholder { color: #666; opacity: 1; }
`;
const Coord = styled.input`
  width: 101px;
  height: 21px;
  border: 1px solid ${c.line};
  border-radius: 4px;
  background: ${c.list};
  text-align: center;
  padding: 0;
`;
const Gap = styled.span`
  width: ${(p) => p.$w}px;
`;

export default function App() {
  return (
    <Window>
      <GlobalStyle />
      <TitleBar>
        <Icon n="q" />
        <h1>*lab4 — QGIS</h1>
        <WinControls>
          <WinButton aria-label="Minimize"><Icon n="min" s={13} /></WinButton>
          <WinButton aria-label="Restore"><Icon n="restore" s={13} /></WinButton>
          <WinButton aria-label="Close"><Icon n="x" s={15} /></WinButton>
        </WinControls>
      </TitleBar>
      <MenuBar>
        {menus.map(([a, b, d]) => <MenuItem key={a + b + d}>{a}<u>{b}</u>{d}</MenuItem>)}
      </MenuBar>
      <Toolbar $h={38}><Tools spec={row1} /></Toolbar>
      <Toolbar $h={40}><Tools spec={row2} /></Toolbar>
      <Toolbar $h={39}><Tools spec={row3} /></Toolbar>

      <Body>
        <Dock>
          <DockTitle><h2>Browser</h2><IconButton aria-label="Close Browser"><Icon n="dockClose" s={14} /></IconButton></DockTitle>
          <DockTools><Tools spec="addBlank refresh funnel treeUp info" w={26} s={14} /></DockTools>
          <Frame $h={134} $mb={7}>
            <List>
              {browser.map(([ic, t, a]) => (
                <TreeRow key={t}><span className="arrow">{a && <Icon n="right" s={7} />}</span><Icon n={ic} s={15} /><span>{t}</span></TreeRow>
              ))}
            </List>
            <Scroll><Thumb $h="50px" /></Scroll>
          </Frame>
          <DockTitle $bare><h2>Layers</h2></DockTitle>
          <DockTools><Tools spec="styling addGroup eye funnelMenu expr v treeDown treeUp removeBlank" w={26} s={15} /></DockTools>
          <Frame>
            <List>
              {layers.map(([t, k, col, o = {}], i) => (
                <LayerRow key={i} $on={o.on}>
                  <span className="arrow">{o.arrow && <Icon n="right" s={8} />}</span>
                  <Check id={`layer-${i}`} type="checkbox" defaultChecked={!!o.ck} />
                  <Swatch $k={k} $c={col}>{k === "poly" && <Icon n="poly" />}</Swatch>
                  <LayerName htmlFor={`layer-${i}`} $it={!o.plain} $u={o.on}>{t}</LayerName>
                  {o.chip && <ChipButton aria-label="Temporary layer"><Icon n="chipFlat" s={14} /></ChipButton>}
                </LayerRow>
              ))}
            </List>
          </Frame>
        </Dock>

        <MapArea>
          <MessageBar>
            <Icon n="check" s={20} />
            <p><strong>Layer Exported:</strong> Successfully saved vector layer to <a href="#b_bay">b_bay.shp</a></p>
            <em>2 more</em>
            <IconButton aria-label="Dismiss"><Icon n="closeRound" s={17} /></IconButton>
            <Drop $w={10} aria-label="More messages"><Icon n="down" s={7} /></Drop>
          </MessageBar>
          <MapCanvas />
        </MapArea>

        <Dock $right>
          <DockTitle><h2>Processing Toolbox</h2><IconButton aria-label="Close Processing Toolbox"><Icon n="dockClose" s={14} /></IconButton></DockTitle>
          <DockTools><Tools spec="models pyMenu clock *doc . editNote . wrench" w={26} s={15} /></DockTools>
          <SearchBox><Icon n="mag" s={13} /><input aria-label="Search" defaultValue="b" /><Icon n="clear" s={13} /></SearchBox>
          <Frame $mb={5}>
            <List>
              {toolbox.map(([ic, cat, kids]) => (
                <React.Fragment key={cat}>
                  <TreeRow $on={cat === "Recently used"} $arrow={24}><span className="arrow"><Icon n="down" s={9} /></span><Icon n={ic} s={15} /><span>{cat}</span></TreeRow>
                  {kids.map((k) => {
                    const [g, t] = Array.isArray(k) ? k : ["gearList", k];
                    return <TreeRow key={t} $pad={44}><Icon n={g} s={15} /><span>{t}</span></TreeRow>;
                  })}
                </React.Fragment>
              ))}
            </List>
            <Scroll><Thumb $h="32px" /></Scroll>
          </Frame>
          <DockTitle><h2>Results Viewer</h2><IconButton aria-label="Close Results Viewer"><Icon n="dockClose" s={14} /></IconButton></DockTitle>
          <Frame $h={191}>
            <List>
              {["07:54:11PM", "07:54:07PM", "07:50:51PM"].map((t, i) => (
                <TreeRow key={t} $on={i === 0} $pad={4}><Icon n="sigmaList" s={14} /><span>Statistics [{t}]</span></TreeRow>
              ))}
            </List>
          </Frame>
          <Grip />
          <Frame $h={55}>
            <Details>
              <strong>Algorithm:</strong> Statistics<br />
              <strong>File path:</strong>{" "}
              <a href="#result">C:<br />\Users\User\AppData\Local\Temp\processing_mjycQW\9<br />dec135e3a4449419a63ed7cfed4d8c1\OUTPUT_HTML_FI</a>
            </Details>
            <Scroll><Thumb $h="34px" /></Scroll>
          </Frame>
        </Dock>
      </Body>

      <Status>
        <Locate><Icon n="mag" s={11} /><input aria-label="Locate" placeholder="Type to locate (Ctrl+K)" /></Locate>
        <label htmlFor="coord">Coordinate</label>
        <Coord id="coord" defaultValue="347664,3491538" />
        <IconButton aria-label="Toggle extents"><Icon n="mouse" s={17} /></IconButton>
        <Gap $w={6} />
        <label htmlFor="scale">Scale</label>
        <Combo $w={97} $h={22}>
          <select id="scale" defaultValue="1:3254825"><option>1:3254825</option></select><Icon n="down" s={8} />
        </Combo>
        <Gap $w={5} />
        <IconButton aria-label="Lock scale"><Icon n="lock" s={14} /></IconButton>
        <label htmlFor="mag">Magnifier</label>
        <Combo $w={83} $h={22}><input id="mag" defaultValue="100%" /><Icon n="spin" s={11} /></Combo>
        <Gap $w={1} />
        <label htmlFor="rot">Rotation</label>
        <Gap $w={2} />
        <Combo $w={83} $h={22}><input id="rot" defaultValue="0,0 °" /><Icon n="spin" s={11} /></Combo>
        <Gap />
        <Check id="render" type="checkbox" defaultChecked $fill />
        <label htmlFor="render">Render</label>
        <Gap $w={6} />
        <Icon n="globe" s={13} />
        <span>EPSG:2964</span>
        <Gap $w={14} />
        <IconButton aria-label="Messages"><Icon n="bubble" s={17} /></IconButton>
      </Status>

      <Dialog
        x={920} y={190} title="Line Intersections"
        tabs={[["Parameters", 89, true], ["Log", 51]]}
        helpTitle="Line intersections"
        help={["This algorithm creates point features where the\nlines in the Intersect layer intersect the lines in\nthe Input layer."]}
        actions={[["Run", 29], ["Close", 36], ["Help", 31]]}
      >
        <LayerInput id="in" label="Input layer" value="majrivers [EPSG:2964]" />
        <LayerInput id="ix" label="Intersect layer" value="railroads [EPSG:2964]" mt={6} />
        <Label htmlFor="f1" $mt={6}>Input fields to keep (leave empty to keep all fields) [optional]</Label>
        <Line><Field id="f1" placeholder="0 options selected" readOnly /><More /></Line>
        <Label htmlFor="f2" $mt={5}>Intersect fields to keep (leave empty to keep all fields) [optional]</Label>
        <Line><Field id="f2" placeholder="0 options selected" readOnly /><More /></Line>
        <Advanced><Icon n="triangle" s={12} />Advanced Parameters</Advanced>
        <Label htmlFor="f3" $mt={8}>Intersections</Label>
        <Line><Field id="f3" $fill placeholder="[Create temporary layer]" /><More menu /></Line>
        <CheckLine $mt={7}><Check type="checkbox" defaultChecked $fill />Open output file after running algorithm</CheckLine>
      </Dialog>

      <Dialog
        x={253} y={301} on flush title="Basic Statistics for Fields"
        tabs={[["Parameters", 89], ["Log", 51, true]]}
        helpTitle="Basic statistics for fields"
        help={["This algorithm generates basic statistics from the\nanalysis of a values in a field in the attribute table\nof a vector layer. Numeric, date, time and string\nfields are supported.", "The statistics returned will depend on the field\ntype.", "Statistics are generated as an HTML file."]}
        actions={[["Change Parameters", 105], ["Close", 36, true], ["Help", 31]]}
      >
        <LogBox>
          <LogText>
            <pre>{logLines}</pre>
            <p>Loading resulting layers</p>
            <p>Algorithm 'Basic statistics for fields' finished</p>
            <p>HTML output has been generated by this algorithm.</p>
            <p>Open the results dialog to check it.</p>
          </LogText>
          <Scroll $end><Thumb $h="94px" /></Scroll>
        </LogBox>
        <LogFooter>
          <IconButton aria-label="Save log"><Icon n="save" s={15} /></IconButton>
          <IconButton aria-label="Copy log"><Icon n="copyLight" s={15} /></IconButton>
          <IconButton aria-label="Clear log"><Icon n="broom" s={15} /></IconButton>
        </LogFooter>
      </Dialog>
    </Window>
  );
}
